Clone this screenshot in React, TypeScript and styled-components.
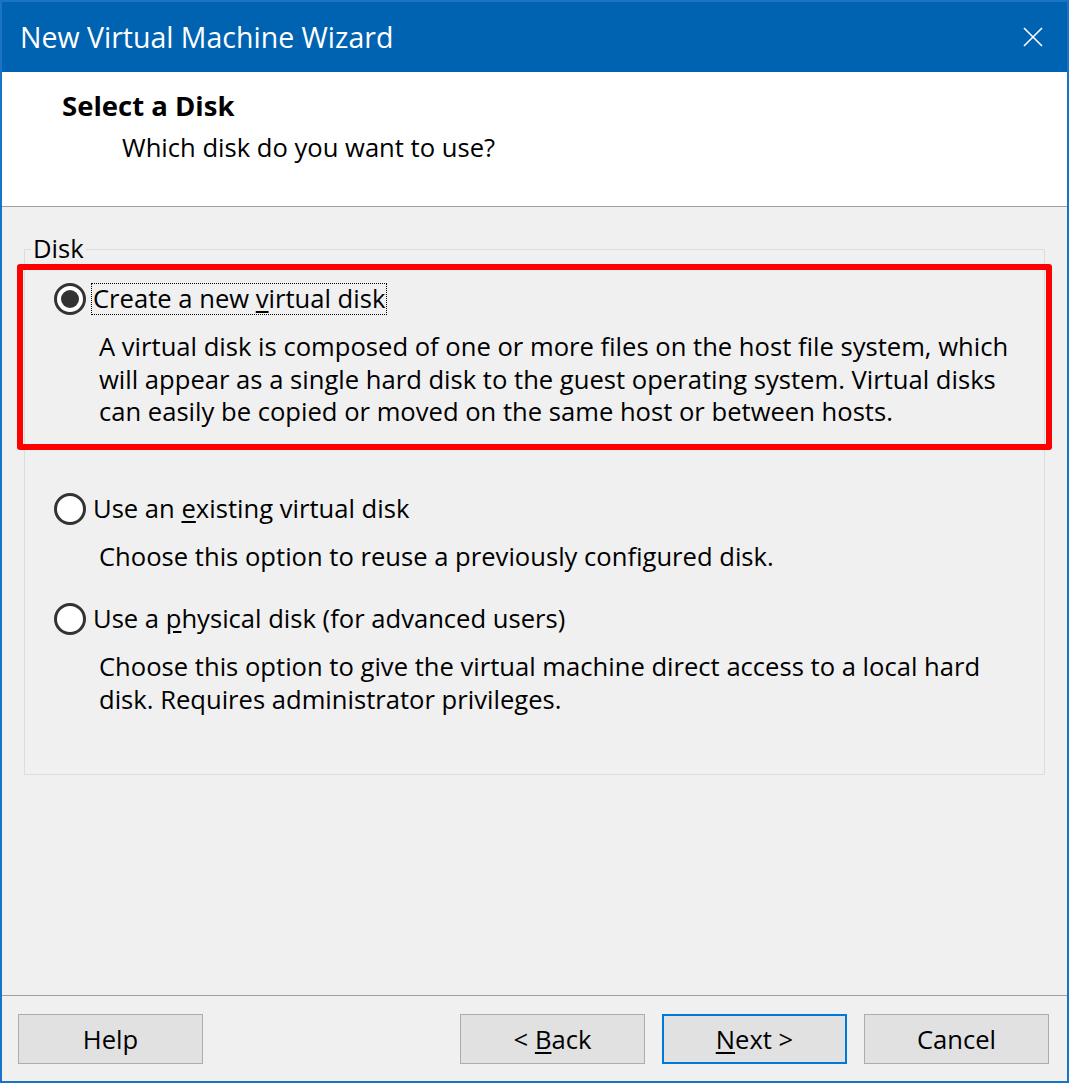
import React from "react";
import styled, { createGlobalStyle } from "styled-components";

const GlobalStyle = createGlobalStyle`
  * {
    box-sizing: border-box;
  }
  body {
    margin: 0;
    background: #ffffff;
    font-family: "Open Sans", "Noto Sans", sans-serif;
    color: #000000;
  }
`;

const options = [
  {
    id: "new",
    before: "Create a new ",
    key: "v",
    after: "irtual disk",
    lines: [
      "A virtual disk is composed of one or more files on the host file system, which",
      "will appear as a single hard disk to the guest operating system. Virtual disks",
      "can easily be copied or moved on the same host or between hosts.",
    ],
    checked: true,
    gap: 0,
  },
  {
    id: "existing",
    before: "Use an ",
    key: "e",
    after: "xisting virtual disk",
    lines: ["Choose this option to reuse a previously configured disk."],
    checked: false,
    gap: 64,
  },
  {
    id: "physical",
    before: "Use a ",
    key: "p",
    after: "hysical disk (for advanced users)",
    lines: [
      "Choose this option to give the virtual machine direct access to a local hard",
      "disk. Requires administrator privileges.",
    ],
    checked: false,
    gap: 30,
  },
];

const App = () => {
  return (
    <>
      <GlobalStyle />
      <StWindow>
        <StTitleBar>
          <StTitle>New Virtual Machine Wizard</StTitle>
          <StClose type="button" aria-label="Close">
            <svg width="20" height="20" viewBox="0 0 20 20">
              <path d="M1 1 L19 19 M19 1 L1 19" stroke="#ffffff" strokeWidth="1.6" />
            </svg>
          </StClose>
        </StTitleBar>

        <StHeader>
          <StHeading>Select a Disk</StHeading>
          <StSubHeading>Which disk do you want to use?</StSubHeading>
        </StHeader>

        <StBody>
          <StGroup>
            <StLegend>Disk</StLegend>
            {options.map((opt) => (
              <StOption key={opt.id} $gap={opt.gap}>
                {opt.checked && <StHighlight />}
                <StRadioRow>
                  <StRadio $checked={opt.checked} />
                  <StLabel $focused={opt.checked}>
                    {opt.before}
                    <u>{opt.key}</u>
                    {opt.after}
                  </StLabel>
                </StRadioRow>
                <StDesc>
                  {opt.lines.map((line) => (
                    <div key={line}>{line}</div>
                  ))}
                </StDesc>
              </StOption>
            ))}
          </StGroup>
        </StBody>

        <StFooter>
          <StButton type="button">Help</StButton>
          <StSpacer />
          <StButton type="button">
            &lt; <u>B</u>ack
          </StButton>
          <StButton type="button" $primary>
            <u>N</u>ext &gt;
          </StButton>
          <StButton type="button">Cancel</StButton>
        </StFooter>
      </StWindow>
    </>
  );
};

export default App;

const StWindow = styled.div`
  display: flex;
  flex-direction: column;
  width: 1069px;
  height: 1083px;
  border: 2px solid #1a73c9;
  background: #f0f0f0;
`;

const StTitleBar = styled.div`
  display: flex;
  align-items: center;
  justify-content: space-between;
  height: 70px;
  padding: 0 0 0 18px;
  background: #0063b1;
`;

const StTitle = styled.span`
  font-size: 28.5px;
  color: #ffffff;
`;

const StClose = styled.button`
  display: flex;
  align-items: center;
  justify-content: center;
  width: 70px;
  height: 70px;
  border: none;
  background: transparent;
  padding: 0 0 0 2px;
`;

const StHeader = styled.div`
  display: flex;
  flex-direction: column;
  gap: 10px;
  height: 135px;
  padding: 18px 0 0 60px;
  background: #ffffff;
  border-bottom: 1px solid #a0a0a0;
`;

const StHeading = styled.span`
  font-size: 27.5px;
  font-weight: 700;
  line-height: 32px;
`;

const StSubHeading = styled.span`
  padding-left: 60px;
  font-size: 25.6px;
  line-height: 32px;
`;

const StBody = styled.div`
  flex: 1;
  padding: 26px 22px 0 22px;
`;

const StGroup = styled.fieldset`
  margin: 0;
  height: 542px;
  padding: 18px 29px 0 29px;
  border: 1px solid #dcdcdc;
`;

const StLegend = styled.legend`
  margin-left: -23px;
  padding: 0 2px;
  font-size: 25.6px;
  line-height: 32px;
`;

const StOption = styled.div<{ $gap: number }>`
  position: relative;
  margin-top: ${({ $gap }) => $gap}px;
`;

const StHighlight = styled.div`
  position: absolute;
  top: -19px;
  left: -37px;
  right: -37px;
  bottom: -21px;
  border: 6px solid #ff0000;
  border-radius: 3px;
  pointer-events: none;
`;

const StRadioRow = styled.div`
  display: flex;
  align-items: center;
  gap: 5px;
  height: 32px;
`;

const StRadio = styled.span<{ $checked: boolean }>`
  position: relative;
  flex: none;
  width: 32px;
  height: 32px;
  border-radius: 50%;
  border: 3px solid #333333;
  background: #ffffff;

  &::after {
    content: "";
    display: ${({ $checked }) => ($checked ? "block" : "none")};
    position: absolute;
    inset: 4px;
    border-radius: 50%;
    background: #333333;
  }
`;

const StLabel = styled.span<{ $focused: boolean }>`
  padding: 0 1px;
  font-size: 25.6px;
  line-height: 30px;
  border: 1px dotted ${({ $focused }) => ($focused ? "#000000" : "transparent")};

  u {
    text-underline-offset: 3px;
  }
`;

const StDesc = styled.div`
  margin-top: 16px;
  padding-left: 45px;
  font-size: 25.6px;
  line-height: 32.5px;
`;

const StFooter = styled.div`
  display: flex;
  gap: 17px;
  height: 86px;
  padding: 18px 18px 0 16px;
  border-top: 1px solid #a0a0a0;
`;

const StSpacer = styled.div`
  flex: 1;
`;

const StButton = styled.button<{ $primary?: boolean }>`
  width: 185px;
  height: 50px;
  border: ${({ $primary }) => ($primary ? "2px solid #0078d7" : "1px solid #adadad")};
  background: #e1e1e1;
  font-family: "Open Sans", "Noto Sans", sans-serif;
  font-size: 25.6px;
  color: #000000;
  padding: 0;

  u {
    text-underline-offset: 3px;
  }
`;
